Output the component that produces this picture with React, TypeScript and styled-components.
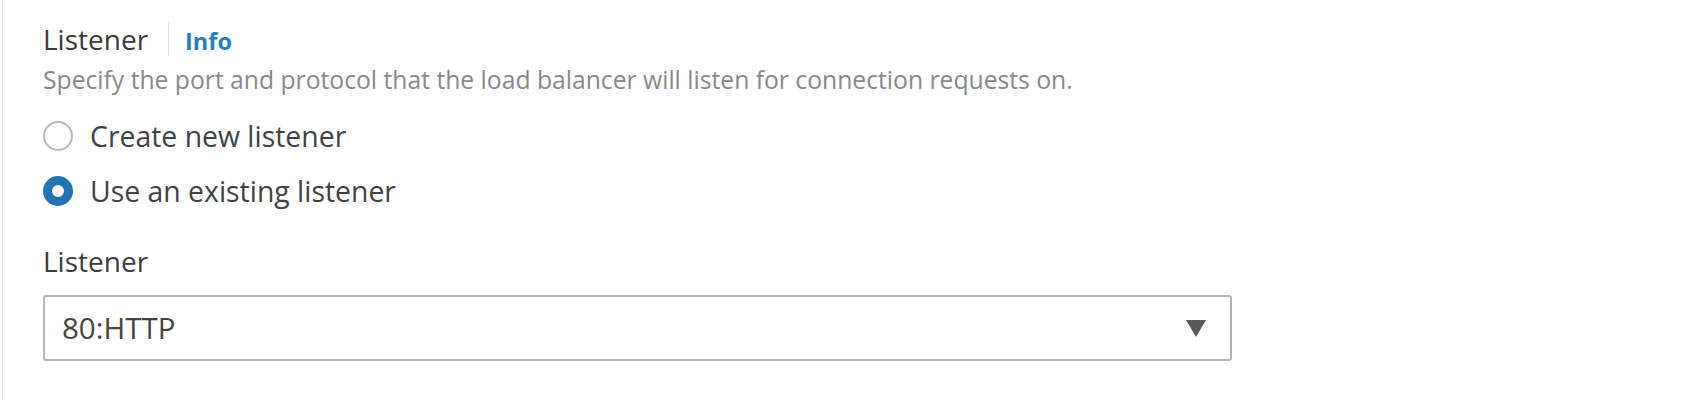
import styled, { createGlobalStyle } from "styled-components";
import { useState } from "react";

const GlobalStyle = createGlobalStyle`
  html, body {
    margin: 0;
    padding: 0;
    background: #ffffff;
    font-family: "Open Sans", "Liberation Sans", sans-serif;
  }
`;

// thin panel edge on the left, content inset from it
const Panel = styled.section`
  margin-left: 2px;
  min-height: 400px;
  box-sizing: border-box;
  border-left: 1px solid #e6e8ea;
  padding: 21px 0 0 40px;
`;

const HeaderRow = styled.div`
  display: flex;
  align-items: baseline;
  height: 36px;
`;

const Title = styled.h2`
  margin: 0;
  font-size: 28px;
  line-height: 36px;
  font-weight: 400;
  color: #383a3d;
`;

const Divider = styled.span`
  align-self: center;
  width: 1px;
  height: 34px;
  margin: 0 16px 0 20px;
  background: #dcdfe2;
`;

const InfoLink = styled.a`
  font-size: 23.5px;
  line-height: 36px;
  font-weight: 700;
  color: #2b7bbd;
  text-decoration: none;
  cursor: pointer;
`;

const Description = styled.p`
  margin: 8px 0 0;
  font-size: 24.7px;
  line-height: 30px;
  color: #85898d;
`;

const RadioGroup = styled.div`
  display: flex;
  flex-direction: column;
  gap: 19px;
  margin-top: 23px;
`;

const RadioRow = styled.label`
  display: flex;
  align-items: center;
  gap: 17px;
  height: 36px;
  cursor: pointer;
`;

const RadioDot = styled.span<{ $checked: boolean }>`
  box-sizing: border-box;
  width: 30px;
  height: 30px;
  border-radius: 50%;
  background: #ffffff;
  border: ${(p) => (p.$checked ? "9px solid #2473b5" : "2.5px solid #b7b9bb")};
`;

const RadioText = styled.span`
  font-size: 28.4px;
  line-height: 36px;
  color: #404245;
`;

const FieldLabel = styled.div`
  margin-top: 34px;
  font-size: 28px;
  line-height: 36px;
  color: #3a3c3f;
`;

const Select = styled.div`
  box-sizing: border-box;
  display: flex;
  align-items: center;
  justify-content: space-between;
  width: 1189px;
  height: 66px;
  margin-top: 16px;
  padding: 0 24px 0 17px;
  border: 2px solid #b3b6b8;
  border-radius: 3px;
  background: #ffffff;
`;

const SelectValue = styled.span`
  font-size: 29.5px;
  line-height: 36px;
  color: #4a4340;
`;

const Caret = () => (
  <svg width="20" height="17" viewBox="0 0 20 17">
    <path d="M0 0 H20 L10 17 Z" fill="#56595c" />
  </svg>
);

const options = ["Create new listener", "Use an existing listener"];

export default function App() {
  const [choice, setChoice] = useState(1);

  return (
    <>
      <GlobalStyle />
      <Panel>
        <HeaderRow>
          <Title>Listener</Title>
          <Divider />
          <InfoLink>Info</InfoLink>
        </HeaderRow>
        <Description>
          Specify the port and protocol that the load balancer will listen for connection requests on.
        </Description>

        <RadioGroup>
          {options.map((opt, i) => (
            <RadioRow key={opt} onClick={() => setChoice(i)}>
              <RadioDot $checked={choice === i} />
              <RadioText>{opt}</RadioText>
            </RadioRow>
          ))}
        </RadioGroup>

        <FieldLabel>Listener</FieldLabel>
        <Select>
          <SelectValue>80:HTTP</SelectValue>
          <Caret />
        </Select>
      </Panel>
    </>
  );
}
